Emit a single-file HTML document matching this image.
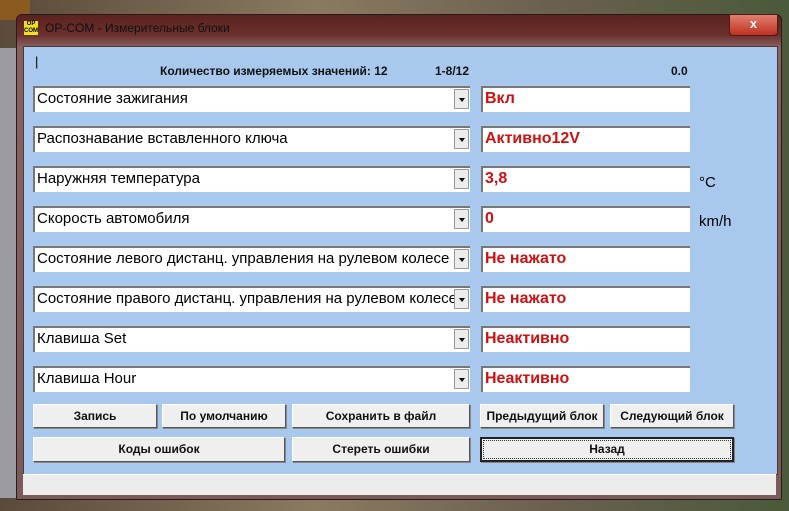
<!DOCTYPE html><html><head><meta charset="utf-8"><style>
body{margin:0;width:789px;height:511px;overflow:hidden;position:relative;font-family:"Liberation Sans",sans-serif;background:linear-gradient(90deg,#5a4a3a,#8a7a60 40%,#6a6050 70%,#4a5a3a)}
.a{position:absolute}
.win{left:16px;top:14px;width:766px;height:486px;background:linear-gradient(180deg,#5a2220 0,#6a302c 20px,#8a6060 32px,#7a5a5a 100%);border:1px solid #2a1a1a;border-radius:6px 6px 2px 2px;box-sizing:border-box}
.client{left:23px;top:46px;width:753px;height:427px;background:#a8c9ed;border:1px solid #4a3a3a}
.status{left:23px;top:474px;width:753px;height:20px;background:#ececec;border-top:1px solid #fff}
.dd{left:33px;width:437px;height:26px;background:#fff;border-top:2px solid #777;border-left:2px solid #777;box-sizing:border-box;font-size:15px;line-height:22px;padding-left:2px;white-space:nowrap;overflow:hidden}
.dd b{position:absolute;right:1px;top:1px;width:15px;height:20px;background:#ececec;border:1px solid #999;box-sizing:border-box}
.dd b:after{content:"";position:absolute;left:4px;top:8px;border:3px solid transparent;border-top:4px solid #000}
.val{left:481px;width:209px;height:26px;background:#fff;border-top:2px solid #777;border-left:2px solid #777;box-sizing:border-box;color:#d01010;font-weight:bold;font-size:16px;line-height:22px;padding-left:2px}
.btn{background:#efefef;border:1px solid #fff;border-right-color:#555;border-bottom-color:#555;box-sizing:border-box;font-size:12px;font-weight:bold;text-align:center;color:#111;box-shadow:1px 1px 0 #888}
</style></head><body>
<div class="a" style="left:0;top:48px;width:16px;height:450px;background:#9a9aa0;border-right:1px solid #333"></div>
<div class="a" style="left:0;top:0;width:30px;height:20px;background:#8a5a20"></div>
<div class="a win"></div>
<div class="a" style="left:24px;top:21px;width:14px;height:14px;background:#f0e020;font-size:6px;line-height:7px;text-align:center;font-weight:bold">OP<br>COM</div>
<div class="a" style="left:45px;top:21px;font-size:12px;color:#111">OP-COM - Измерительные блоки</div>
<div class="a" style="left:729px;top:14px;width:47px;height:20px;background:linear-gradient(#e08070,#c03020);border:1px solid #4a1a1a;border-radius:0 0 4px 4px;color:#fff;font-weight:bold;font-size:13px;text-align:center;line-height:18px">x</div>
<div class="a client"></div>
<div class="a status"></div>
<div class="a" style="left:35px;top:54px;font-size:13px">|</div>
<div class="a" style="left:160px;top:64px;font-size:12px;font-weight:bold;color:#111">Количество измеряемых значений: 12</div>
<div class="a" style="left:435px;top:64px;font-size:12px;font-weight:bold;color:#111">1-8/12</div>
<div class="a" style="left:671px;top:64px;font-size:12px;font-weight:bold;color:#111">0.0</div>

<div class="a dd" style="top:86px">Состояние зажигания<b></b></div><div class="a val" style="top:86px">Вкл</div>
<div class="a dd" style="top:126px">Распознавание вставленного ключа<b></b></div><div class="a val" style="top:126px">Активно12V</div>
<div class="a dd" style="top:166px">Наружняя температура<b></b></div><div class="a val" style="top:166px">3,8</div>
<div class="a dd" style="top:206px">Скорость автомобиля<b></b></div><div class="a val" style="top:206px">0</div>
<div class="a dd" style="top:246px">Состояние левого дистанц. управления на рулевом колесе<b></b></div><div class="a val" style="top:246px">Не нажато</div>
<div class="a dd" style="top:286px">Состояние правого дистанц. управления на рулевом колесе<b></b></div><div class="a val" style="top:286px">Не нажато</div>
<div class="a dd" style="top:326px">Клавиша Set<b></b></div><div class="a val" style="top:326px">Неактивно</div>
<div class="a dd" style="top:366px">Клавиша Hour<b></b></div><div class="a val" style="top:366px">Неактивно</div>
<div class="a" style="left:699px;top:174px;font-size:15px">°C</div>
<div class="a" style="left:699px;top:213px;font-size:15px">km/h</div>

<div class="a btn" style="left:33px;top:404px;width:124px;height:24px;line-height:22px">Запись</div>
<div class="a btn" style="left:162px;top:404px;width:124px;height:24px;line-height:22px">По умолчанию</div>
<div class="a btn" style="left:292px;top:404px;width:178px;height:24px;line-height:22px">Сохранить в файл</div>
<div class="a btn" style="left:480px;top:404px;width:124px;height:24px;line-height:22px">Предыдущий блок</div>
<div class="a btn" style="left:610px;top:404px;width:124px;height:24px;line-height:22px">Следующий блок</div>
<div class="a btn" style="left:33px;top:437px;width:252px;height:25px;line-height:23px">Коды ошибок</div>
<div class="a btn" style="left:292px;top:437px;width:178px;height:25px;line-height:23px">Стереть ошибки</div>
<div class="a btn" style="left:480px;top:437px;width:254px;height:25px;line-height:21px;border:2px solid #222"><div style="border:1px dotted #333;margin:1px;line-height:17px">Назад</div></div>
</body></html>
